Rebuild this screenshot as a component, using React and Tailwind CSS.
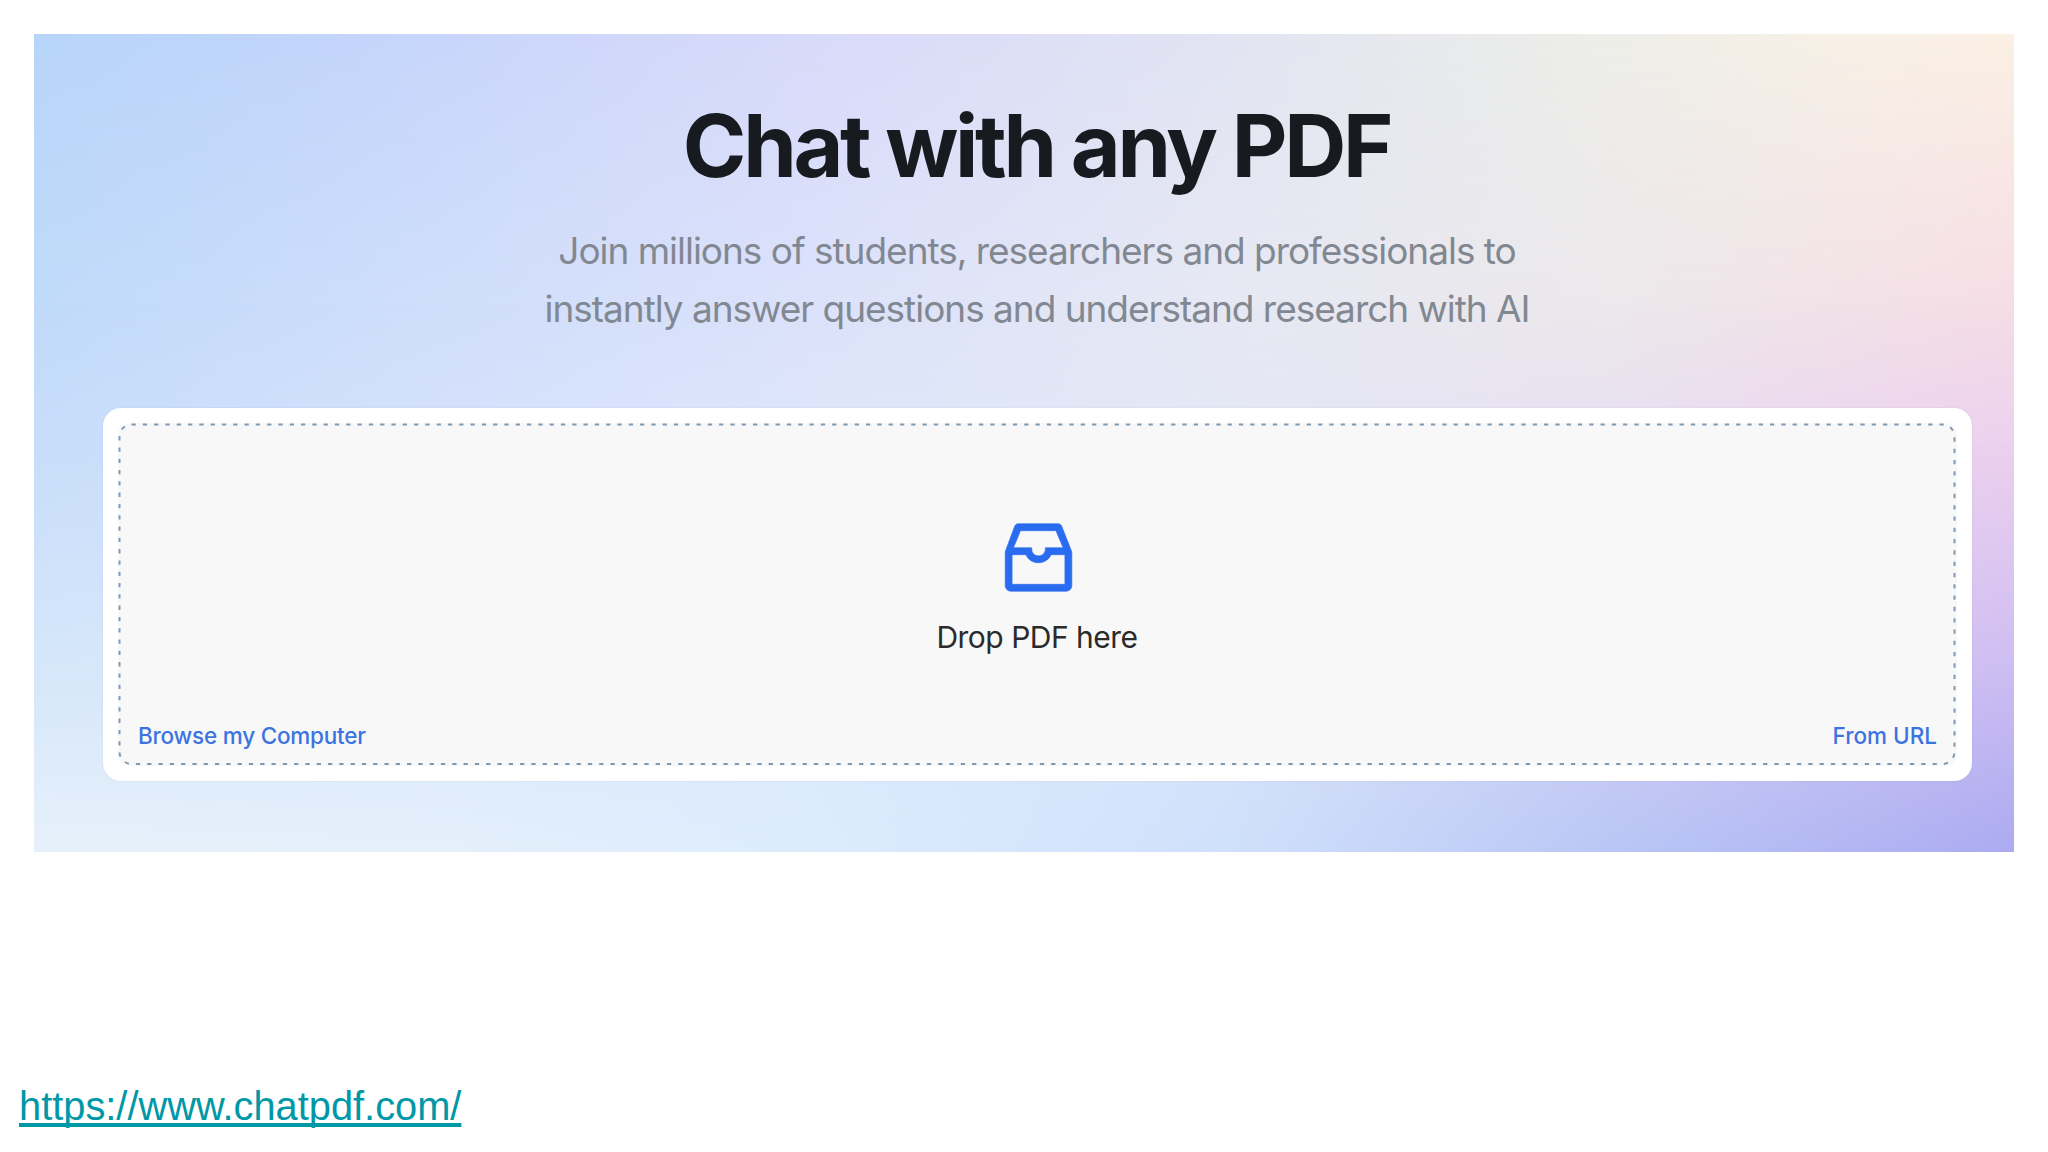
import { AiOutlineInbox } from 'react-icons/ai'

// Soft mesh background: each layer fades in over the one above it
function HeroBackground() {
  return (
    <div className="absolute inset-0 -z-10">
      <div className="absolute inset-0 bg-[linear-gradient(90deg,#b8d5fa_0%,#c4d5fb_16%,#d8dafa_38%,#e2e4f3_60%,#ebedea_76%,#f8f1e6_92%,#fbf0e4_100%)]" />
      <div className="absolute inset-0 bg-[linear-gradient(90deg,#c0daf9_0%,#cfdefb_20%,#dce2fa_40%,#e6e8f3_60%,#ece8eb_80%,#f6dde5_100%)] mask-[linear-gradient(180deg,transparent_0%,black_33%)]" />
      <div className="absolute inset-0 bg-[linear-gradient(90deg,#c7ddfa_0%,#d5e1fc_20%,#dee6fa_40%,#e4e8f5_60%,#e8dff1_80%,#edd0ee_100%)] mask-[linear-gradient(180deg,transparent_33%,black_50%)]" />
      <div className="absolute inset-0 bg-[linear-gradient(90deg,#d6e7fa_0%,#d9e7fb_20%,#dbe9fc_40%,#d9e5f8_60%,#d3cdf2_80%,#cdbcf2_100%)] mask-[linear-gradient(180deg,transparent_50%,black_78%)]" />
      <div className="absolute inset-0 bg-[linear-gradient(90deg,#e6f0fa_0%,#e4effb_20%,#dcecfd_39%,#cfe0fb_60%,#b8c6f5_80%,#abaaf1_100%)] mask-[linear-gradient(180deg,transparent_78%,black_100%)]" />
    </div>
  )
}

function DropZone() {
  return (
    <div className="relative mt-[70px] ml-[69px] w-[1869px] h-[373px] rounded-[18px] bg-white p-[15px] shadow-[0_0_2px_rgba(120,130,170,0.2)]">
      <svg className="absolute inset-0 w-full h-full" fill="none">
        <rect
          x="16.5"
          y="16.5"
          width="1835"
          height="339.5"
          rx="12"
          stroke="#7f99b3"
          strokeWidth="2"
          strokeDasharray="4.3 7"
        />
      </svg>
      <div className="flex h-full flex-col items-center rounded-xl bg-[#f8f8f8] px-5">
        <AiOutlineInbox className="mt-[89px] ml-px size-[91px] text-[#2a6cf0]" strokeWidth="8" />
        <p className="mt-[14px] mr-px text-[30px] leading-[40px] tracking-[-0.5px] text-[#2b2b2b]">Drop PDF here</p>
        <div className="mt-[64px] flex w-full justify-between text-[22.5px] leading-[30px] font-medium tracking-[-0.22px] text-[#3b74e0]">
          <button>Browse my Computer</button>
          <button className="tracking-normal">From URL</button>
        </div>
      </div>
    </div>
  )
}

export default function App() {
  return (
    <div className="flex h-[1152px] w-[2048px] flex-col overflow-hidden bg-white font-['Inter',sans-serif]">
      <section className="relative isolate mt-[34px] ml-[34px] h-[818px] w-[1980px] overflow-hidden">
        <HeroBackground />
        <div className="ml-[26px] flex flex-col items-center pt-[60px] text-center">
          <h1 className="mr-px text-[86px] leading-[104px] font-[650] tracking-[-3.3px] text-[#171a1e]">
            Chat with any PDF
          </h1>
          <p className="mt-[24px] text-[37px] leading-[58px] tracking-[-1.02px] whitespace-nowrap text-[#828892]">
            Join millions of students, researchers and professionals to
            <br />
            instantly answer questions and understand research with AI
          </p>
        </div>
        <DropZone />
      </section>
      <a
        href="https://www.chatpdf.com/"
        className="mt-[231px] ml-[19px] self-start font-['Liberation_Sans',Arial,sans-serif] text-[39.8px] leading-[46px] text-[#0097a7] underline decoration-4 underline-offset-[3px] [text-decoration-skip-ink:none]"
      >
        https://www.chatpdf.com/
      </a>
    </div>
  )
}
